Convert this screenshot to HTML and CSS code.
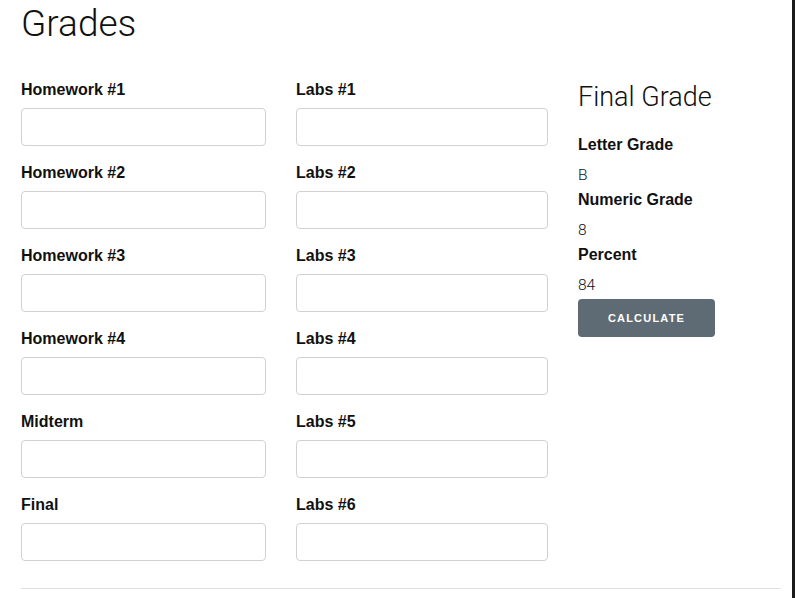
FILE: index.html
```html
<!DOCTYPE html>
<html>
<head>
<meta charset="utf-8">
<title>Grades</title>
<link rel="stylesheet" href="styles.css">
</head>
<body>
<div class="container">
  <h1 class="page-title">Grades</h1>
  <div class="grid">
    <div class="col">
      <label class="field-label">Homework #1</label>
      <input class="field" type="text">
      <label class="field-label">Homework #2</label>
      <input class="field" type="text">
      <label class="field-label">Homework #3</label>
      <input class="field" type="text">
      <label class="field-label">Homework #4</label>
      <input class="field" type="text">
      <label class="field-label">Midterm</label>
      <input class="field" type="text">
      <label class="field-label">Final</label>
      <input class="field" type="text">
    </div>
    <div class="col">
      <label class="field-label">Labs #1</label>
      <input class="field" type="text">
      <label class="field-label">Labs #2</label>
      <input class="field" type="text">
      <label class="field-label">Labs #3</label>
      <input class="field" type="text">
      <label class="field-label">Labs #4</label>
      <input class="field" type="text">
      <label class="field-label">Labs #5</label>
      <input class="field" type="text">
      <label class="field-label">Labs #6</label>
      <input class="field" type="text">
    </div>
    <div class="col result">
      <h2 class="result-title">Final Grade</h2>
      <div class="field-label small-gap">Letter Grade</div>
      <div class="value">B</div>
      <div class="field-label small-gap">Numeric Grade</div>
      <div class="value">8</div>
      <div class="field-label small-gap">Percent</div>
      <div class="value">84</div>
      <button class="btn" type="button">Calculate</button>
    </div>
  </div>
  <hr class="divider">
</div>
<div class="edge"></div>
</body>
</html>
```

FILE: styles.css
```css
html, body {
  margin: 0;
  padding: 0;
  background: #fff;
}

body {
  font-family: "Liberation Sans", Arial, sans-serif;
  color: #222;
  font-size: 15px;
}

.container {
  width: 760px;
  margin-left: 21px;
}

.page-title {
  font-family: Roboto, "Liberation Sans", sans-serif;
  font-weight: 300;
  font-size: 37px;
  line-height: 44px;
  margin: 2px 0 33px;
  color: #111;
}

.grid {
  display: grid;
  grid-template-columns: 245px 252px 1fr;
  column-gap: 30px;
}

.col {
  display: flex;
  flex-direction: column;
  align-items: stretch;
}

.field-label {
  display: block;
  font-weight: bold;
  font-size: 16px;
  line-height: 22px;
  margin-bottom: 7px;
  color: #111;
}

.field-label.small-gap {
  margin-bottom: 6px;
}

.field {
  box-sizing: border-box;
  height: 38px;
  padding: 6px 10px;
  border: 1px solid #d1d1d1;
  border-radius: 4px;
  background: #fff;
  margin: 0 0 16px;
  font: inherit;
}

.result-title {
  font-family: Roboto, "Liberation Sans", sans-serif;
  font-weight: 300;
  font-size: 27px;
  line-height: 30px;
  margin: 3px 0 22px;
  color: #111;
}

.value {
  font-family: Roboto, "Liberation Sans", sans-serif;
  font-weight: 300;
  font-size: 15.5px;
  line-height: 27px;
  color: #111;
}

.btn {
  align-self: flex-start;
  box-sizing: border-box;
  width: 137px;
  height: 38px;
  border: none;
  border-radius: 4px;
  background: #5f6b74;
  color: #fff;
  font-family: "Liberation Sans", Arial, sans-serif;
  font-weight: bold;
  font-size: 11px;
  letter-spacing: 1.2px;
  text-transform: uppercase;
  padding: 0;
}

.divider {
  border: none;
  border-top: 1px solid #e1e1e1;
  margin: 11px 0 0;
}

.edge {
  position: fixed;
  top: 0;
  right: 0;
  bottom: 0;
  width: 3px;
  background: #1b1b1b;
}
```
